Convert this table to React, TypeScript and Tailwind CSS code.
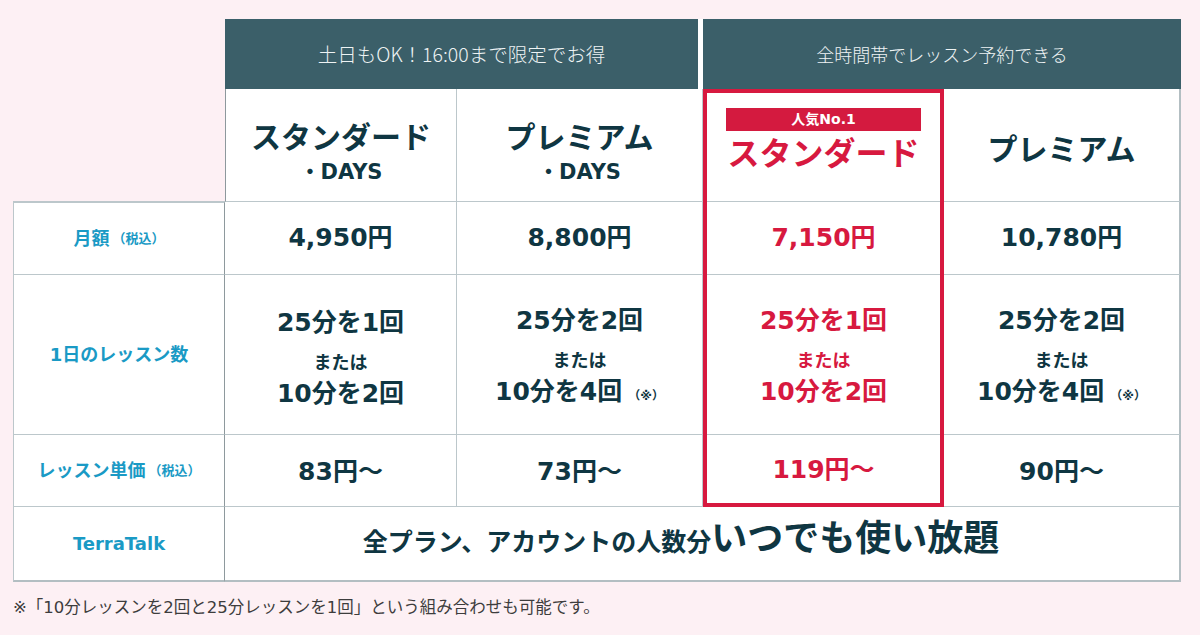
const dark = "text-[#0f3642]";

const Label = ({ main, sub }: { main: string; sub?: boolean }) => (
  <div className="flex items-center justify-center border-b border-l border-r border-b-[#bcc7cb] border-l-[#bcc7cb] border-r-[#8e999d] bg-white text-[18px] font-bold text-[#1a9ac5]">
    {main}
    {sub && <span className="ml-[3px] text-[13px]">（税込）</span>}
  </div>
);

const Cell = ({ children }: { children: React.ReactNode }) => (
  <div className={`flex items-center justify-center border-b border-r border-[#bcc7cb] bg-white font-bold ${dark}`}>
    {children}
  </div>
);

const Lessons = ({ a, b, note, red }: { a: string; b: string; note?: boolean; red?: boolean }) => (
  <div className={`flex flex-col items-center pt-[7px] font-bold ${red ? "text-[#d7193f]" : ""}`}>
    <span className="text-[25px] leading-[32px]">{a}</span>
    <span className="mt-[6px] text-[18px] leading-[36px]">または</span>
    <span className="-mt-[3px] text-[25px] leading-[32px]">
      {b}
      {note && <span className="ml-[6px] text-[12px]">（※）</span>}
    </span>
  </div>
);

export default function App() {
  return (
    <div className="min-h-screen bg-[#fdf0f4] pl-[13px] pt-[19px] font-['DejaVu_Sans','Noto_Sans_CJK_JP',sans-serif]">
      <div className="grid w-[1168px] grid-cols-[212px_232px_246px_241px_237px] grid-rows-[70px_113px_73px_160px_72px_75px]">
        {/* header groups */}
        <div />
        <div className="col-span-2 bg-white pr-[5px]">
          <div className="flex h-full items-center justify-center bg-[#3b5f69] font-['Noto_Sans_CJK_JP',sans-serif] text-[19.5px] font-light text-[#eef3f4]">
            土日もOK！16:00まで限定でお得
          </div>
        </div>
        <div className="col-span-2 flex items-center justify-center bg-[#3b5f69] font-['Noto_Sans_CJK_JP',sans-serif] text-[18px] font-light text-[#eef3f4]">
          全時間帯でレッスン予約できる
        </div>

        {/* plan names */}
        <div className="border-b border-[#bcc7cb]" />
        <div className={`flex flex-col items-center border-b border-l border-r border-[#bcc7cb] border-l-[#8e999d] bg-white pt-[29px] font-bold ${dark}`}>
          <span className="text-[30px] leading-[40px]">スタンダード</span>
          <span className="text-[21px] leading-[28px]">・DAYS</span>
        </div>
        <div className={`flex flex-col items-center border-b border-r border-[#bcc7cb] bg-white pt-[29px] font-bold ${dark}`}>
          <span className="text-[30px] leading-[40px]">プレミアム</span>
          <span className="text-[21px] leading-[28px]">・DAYS</span>
        </div>

        {/* highlighted plan column */}
        <div className="col-start-4 row-span-4 row-start-2 flex flex-col border-[4px] border-[#d7193f] bg-white font-bold text-[#d7193f]">
          <div className="flex h-[109px] flex-col items-center border-b border-[#bcc7cb] pt-[15px]">
            <div className="flex h-[23px] w-[195px] items-center justify-center bg-[#d41a3f] text-[14px] text-white">
              人気No.1
            </div>
            <span className="mt-[3px] text-[32px] leading-[40px]">スタンダード</span>
          </div>
          <div className="flex h-[73px] items-center justify-center border-b border-[#bcc7cb] text-[25px]">7,150円</div>
          <div className="flex h-[160px] items-center justify-center border-b border-[#bcc7cb] pb-[4px]">
            <Lessons a="25分を1回" b="10分を2回" red />
          </div>
          <div className="flex flex-1 items-center justify-center pt-[2px] text-[25px]">119円〜</div>
        </div>

        <div className={`col-start-5 row-start-2 flex items-center justify-center border-b border-r-2 border-[#bcc7cb] border-r-[#b3bec2] bg-white pt-[8px] text-[30px] font-bold ${dark}`}>
          プレミアム
        </div>

        {/* price */}
        <div className="row-start-3 flex items-center justify-center border border-[#bcc7cb] border-r-[#8e999d] bg-white text-[18px] font-bold text-[#1a9ac5]">
          月額<span className="ml-[3px] text-[13px]">（税込）</span>
        </div>
        <Cell>
          <span className="text-[25px]">4,950円</span>
        </Cell>
        <Cell>
          <span className="text-[25px]">8,800円</span>
        </Cell>
        <div className={`col-start-5 row-start-3 flex items-center justify-center border-b border-r-2 border-[#bcc7cb] border-r-[#b3bec2] bg-white text-[25px] font-bold ${dark}`}>
          10,780円
        </div>

        {/* lessons per day */}
        <Label main="1日のレッスン数" />
        <Cell>
          <Lessons a="25分を1回" b="10分を2回" />
        </Cell>
        <Cell>
          <Lessons a="25分を2回" b="10分を4回" note />
        </Cell>
        <div className={`col-start-5 row-start-4 flex items-center justify-center border-b border-r-2 border-[#bcc7cb] border-r-[#b3bec2] bg-white ${dark}`}>
          <Lessons a="25分を2回" b="10分を4回" note />
        </div>

        {/* unit price */}
        <Label main="レッスン単価" sub />
        <Cell>
          <span className="pt-[2px] text-[25px]">83円〜</span>
        </Cell>
        <Cell>
          <span className="pt-[2px] text-[25px]">73円〜</span>
        </Cell>
        <div className={`col-start-5 row-start-5 flex items-center justify-center border-b border-r-2 border-[#bcc7cb] border-r-[#b3bec2] bg-white pt-[2px] text-[25px] font-bold ${dark}`}>
          90円〜
        </div>

        {/* TerraTalk */}
        <div className="flex items-center justify-center border-b-2 border-l border-r border-[#bcc7cb] border-b-[#b3bec2] border-r-[#8e999d] bg-white text-[18px] font-bold text-[#1a9ac5]">
          TerraTalk
        </div>
        <div className={`col-span-4 flex items-center justify-center border-b-2 border-r-2 border-[#b3bec2] bg-white pb-[2px] pr-[42px] font-bold ${dark}`}>
          <p className="leading-[44px]">
            <span className="text-[25px]">全プラン、アカウントの人数分</span>
            <span className="text-[36px]">いつでも使い放題</span>
          </p>
        </div>
      </div>

      <p className="mt-[14px] text-[16.5px] text-[#3d3d3d]">
        ※「10分レッスンを2回と25分レッスンを1回」という組み合わせも可能です。
      </p>
    </div>
  );
}
